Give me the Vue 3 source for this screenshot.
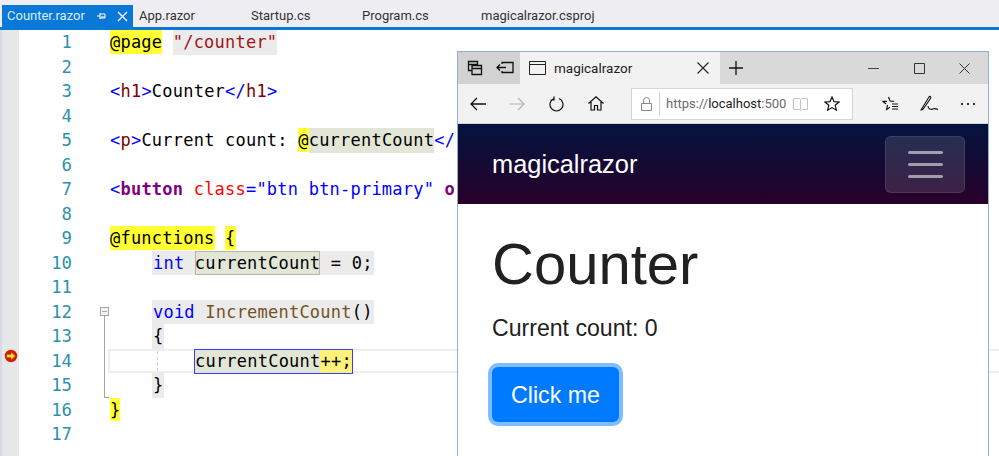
<script setup>
const tabs = ['App.razor', 'Startup.cs', 'Program.cs', 'magicalrazor.csproj']
const lineNumbers = Array.from({ length: 17 }, (_, i) => i + 1)
</script>

<template>
  <div class="screen">
    <header class="tabbar">
      <div class="tab-active">
        <span class="tab-title">Counter.razor</span>
        <svg class="pin" width="12" height="10" viewBox="0 0 12 10"><path d="M1 5h3M4 2v6M4 3h5v4H4M5 6h4" fill="none" stroke="#fff" stroke-width="1"/></svg>
        <svg class="tab-x" width="11" height="11" viewBox="0 0 11 11"><path d="M1 1l9 9M10 1l-9 9" stroke="#fff" stroke-width="1.4"/></svg>
      </div>
      <span v-for="t in tabs" :key="t" class="tab">{{ t }}</span>
    </header>

    <main class="editor">
      <div class="glyph-margin">
        <svg class="bp" width="14" height="14" viewBox="0 0 14 14"><circle cx="7" cy="7" r="6.2" fill="#e51400"/><path d="M2.600 5.200h4.400V2.800L11.600 7 7 11.200V8.800H2.600z" fill="#ffd22e" stroke="#5a4500" stroke-width=".6"/></svg>
      </div>
      <div class="numbers">
        <div v-for="n in lineNumbers" :key="n" class="num">{{ n }}</div>
      </div>
      <div class="code">
        <div class="line"><span class="yl">@page</span> <span class="gy str">"/counter"</span></div>
        <div class="line"></div>
        <div class="line"><span class="tag">&lt;</span><span class="el">h1</span><span class="tag">&gt;</span>Counter<span class="tag">&lt;/</span><span class="el">h1</span><span class="tag">&gt;</span></div>
        <div class="line"></div>
        <div class="line"><span class="tag">&lt;</span><span class="el">p</span><span class="tag">&gt;</span>Current count: <span class="yl">@</span><span class="ol">currentCount</span><span class="tag">&lt;/</span></div>
        <div class="line"></div>
        <div class="line"><span class="tag">&lt;</span><b class="el-b">button</b> <span class="attr">class</span><span class="tag">="btn btn-primary"</span> <b class="el-b">o</b></div>
        <div class="line"></div>
        <div class="line"><span class="yl">@functions</span> <span class="yl">{</span></div>
        <div class="line ind"><span class="gy"><span class="kw">int</span> <span class="ol-box">currentCount</span> = 0;</span></div>
        <div class="line"></div>
        <div class="line ind"><span class="gy"><span class="kw">void</span> <span class="fn">IncrementCount</span>()</span></div>
        <div class="line ind"><span class="gy">{</span></div>
        <div class="line current">
          <span class="guide"></span>
          <span class="exec"><span class="ol-in">currentCount</span><span class="yl-soft">++;</span></span>
        </div>
        <div class="line ind"><span class="gy">}</span></div>
        <div class="line"><span class="yl">}</span></div>
        <div class="line"></div>
        <span class="fold-box"></span>
        <span class="fold-line"></span>
      </div>
    </main>

    <section class="browser">
      <div class="strip">
        <div class="strip-left">
          <svg width="16" height="16" viewBox="0 0 16 16"><path d="M1.500 1.500h9v3h-9zM1.500 4.500v6h3M5 5.500h9.500v9H5zM5 8.500h9.500" fill="none" stroke="#111" stroke-width="1.300"/></svg>
          <svg width="18" height="14" viewBox="0 0 18 14"><path d="M6 3V1.500h11v10H6V10M1 6.500h9M4 3.500l-3 3 3 3" fill="none" stroke="#111" stroke-width="1.300"/></svg>
        </div>
        <div class="strip-tab">
          <svg width="17" height="14" viewBox="0 0 17 14"><path d="M.5.5h16v13H.5zM.5 3.500h16" fill="none" stroke="#222" stroke-width="1"/></svg>
          <span class="strip-title">magicalrazor</span>
          <svg class="strip-close" width="12" height="12" viewBox="0 0 12 12"><path d="M.5.5l11 11M11.500.5l-11 11" stroke="#222" stroke-width="1.100"/></svg>
        </div>
        <svg class="plus" width="14" height="14" viewBox="0 0 14 14"><path d="M7 0v14M0 7h14" stroke="#111" stroke-width="1.300"/></svg>
        <div class="win-controls">
          <svg width="11" height="11" viewBox="0 0 11 11"><path d="M0 5.500h11" stroke="#444"/></svg>
          <svg width="11" height="11" viewBox="0 0 11 11"><path d="M.5.5h10v10H.5z" fill="none" stroke="#333"/></svg>
          <svg width="11" height="11" viewBox="0 0 11 11"><path d="M.5.5l10 10M10.500.5l-10 10" stroke="#333"/></svg>
        </div>
      </div>
      <div class="toolbar">
        <svg class="ti back" width="16" height="14" viewBox="0 0 16 14"><path d="M16 7H1M7 1L1 7l6 6" fill="none" stroke="#111" stroke-width="1.300"/></svg>
        <svg class="ti fwd" width="16" height="14" viewBox="0 0 16 14"><path d="M0 7h15M9 1l6 6-6 6" fill="none" stroke="#b5b5b5" stroke-width="1.200"/></svg>
        <svg class="ti reload" width="15" height="16" viewBox="0 0 15 16"><path d="M5 2.500A6.500 6.500 0 1 0 10 2.500M5 .5v3.500H1.500" fill="none" stroke="#111" stroke-width="1.200"/></svg>
        <svg class="ti home" width="16" height="15" viewBox="0 0 16 15"><path d="M.5 7.500L8 .8l7.500 6.700M3 6v8h3.500V9.500h3V14H13V6" fill="none" stroke="#111" stroke-width="1.200"/></svg>
        <div class="address">
          <svg width="11" height="14" viewBox="0 0 11 14"><path d="M.5 6.500h10v7H.5zM2.500 6.500V3.500a3 3 0 0 1 6 0v3" fill="none" stroke="#888"/></svg>
          <span class="addr-sep"></span>
          <span class="url"><span class="muted">https://</span>localhost<span class="muted">:500</span></span>
          <svg class="book" width="15" height="14" viewBox="0 0 15 14"><path d="M.5 1.500h6l1 1 1-1h6v11h-6l-1 1-1-1h-6zM7.500 2.500v10" fill="none" stroke="#c4c4c4"/></svg>
          <svg class="star" width="16" height="15" viewBox="0 0 16 15"><path d="M8 1l2 4.600 5 .4-3.800 3.300 1.200 4.900L8 11.600l-4.400 2.600 1.200-4.900L1 6l5-.4z" fill="none" stroke="#111" stroke-width="1.200"/></svg>
        </div>
        <svg class="ti favs" width="17" height="15" viewBox="0 0 17 15"><path d="M6.500 1l1.600 4 3.900.300M5.500 9l-.9 4.500L8 11.200M5 5.300H1l3 2.700M10 8h6M10 10.500h6M10 13h6" fill="none" stroke="#111" stroke-width="1.200"/></svg>
        <svg class="ti pen" width="20" height="17" viewBox="0 0 20 17"><path d="M1 15L9 2c1-1.500 2.500 0 1.500 1.500L4 13c-.5 1-1 2-3 2zM8 11c0 3 3 4 5 3s3-.5 5 .5" fill="none" stroke="#111" stroke-width="1.100"/></svg>
        <span class="dots"><i></i><i></i><i></i></span>
      </div>
      <nav class="navbar">
        <span class="brand">magicalrazor</span>
        <span class="toggler"><i></i><i></i><i></i></span>
      </nav>
      <article class="page">
        <h1>Counter</h1>
        <p>Current count: 0</p>
        <button class="btn">Click me</button>
      </article>
    </section>
  </div>
</template>

<style>
html, body { margin: 0; padding: 0; background: #fff; }
</style>

<style scoped>
.screen { position: relative; width: 999px; height: 456px; overflow: hidden; background: #fff; }

.tabbar { box-sizing: border-box; height: 30px; background: #eeeef2; border-bottom: 3px solid #0a78d7; display: flex; align-items: flex-end; font: 13px/22px Roboto, sans-serif; color: #333; }
.tab-active { box-sizing: border-box; width: 131px; height: 22px; margin-left: 2px; padding-left: 5px; background: #0a78d7; color: #d8edf9; display: flex; align-items: center; }
.tab-title { width: 88px; }
.pin { margin-right: 9px; margin-left: 1px; }
.tab { margin-bottom: 0; }
.tab:nth-of-type(1) { margin-left: 6px; width: 112px; }
.tab:nth-of-type(2) { width: 111px; }
.tab:nth-of-type(3) { width: 119px; }

.editor { display: flex; height: 426px; }
.glyph-margin { width: 19px; background: #e6e7e8; border-left: 2px solid #d9d9e4; box-sizing: border-box; position: relative; }
.bp { position: absolute; left: 2px; top: 319px; }
.numbers { width: 53px; text-align: right; color: #2b91af; font: 17.300px/24.500px "DejaVu Sans Mono", monospace; }
.num { height: 24.500px; }
.code { position: relative; flex: 1; margin-left: 38px; font: 17px/24.500px "DejaVu Sans Mono", monospace; letter-spacing: .22px; color: #000; white-space: pre; }
.line { height: 24.500px; }
.ind { padding-left: 42px; }
.ind .gy { padding: 0 1px; }
.yl { background: #ffff33; display: inline-block; height: 23.500px; }
.yl-soft { background: #fff17a; }
.gy { background: #ebebeb; display: inline-block; height: 24.500px; }
.str { color: #a31515; }
.tag { color: #0000ff; }
.el { color: #800000; }
.el-b { color: #800080; }
.attr { color: #ff0000; }
.kw { color: #0000ff; }
.fn { color: #74531f; }
.ol { background: #e2e6d6; display: inline-block; height: 24.500px; }
.ol-box { background: #e2e6d6; box-shadow: inset 0 0 0 1px #b3b6a4; display: inline-block; }
.current { box-sizing: border-box; position: relative; margin-left: -2px; padding-left: 84px; border: 2px solid #eeeef2; border-right: none; line-height: 20.500px; }
.guide { position: absolute; left: 47px; top: 0; height: 20px; border-left: 1px dashed #d0d0d0; }
.exec { display: inline-block; height: 25px; margin-top: -2px; box-sizing: border-box; border: 1px solid #3c3cff; line-height: 23px; vertical-align: top; background: #e2e6d6; }
.ol-in { background: #e2e6d6; display: inline-block; height: 23px; }
.yl-soft { display: inline-block; height: 23px; }
.fold-box { position: absolute; left: -10px; top: 277px; width: 7px; height: 7px; border: 1px solid #a5a5a5; background: linear-gradient(#a5a5a5,#a5a5a5) center/5px 1px no-repeat #f3f3f3; }
.fold-line { position: absolute; left: -6px; top: 286px; width: 4px; height: 81px; border-left: 1px solid #a5a5a5; border-bottom: 1px solid #a5a5a5; }

.browser { position: absolute; left: 457px; top: 51px; width: 532px; height: 405px; box-sizing: border-box; border: 1px solid #8cb0dc; border-bottom: none; background: #fff; display: flex; flex-direction: column; }
.strip { height: 32px; flex: none; background: #d9d9d9; display: flex; align-items: center; }
.strip-left { box-sizing: border-box; width: 62px; height: 32px; padding: 0 6px 0 9px; display: flex; align-items: center; justify-content: space-between; background: #d2d2d2; }
.strip-tab { box-sizing: border-box; width: 200px; height: 32px; padding: 0 8px 0 9px; display: flex; align-items: center; background: #f2f2f2; }
.strip-title { margin-left: 8px; flex: 1; font: 13.500px Roboto, sans-serif; color: #222; }
.strip-close { margin-right: 3px; }
.plus { margin-left: 9px; }
.win-controls { margin-left: auto; padding-right: 18px; display: flex; align-items: center; gap: 34.500px; }
.toolbar { position: relative; height: 40px; flex: none; box-sizing: border-box; background: #f2f2f2; border-bottom: 1px solid #d4d4d4; display: flex; align-items: center; padding-left: 12px; }
.back { margin-right: 23px; }
.fwd { margin-right: 24px; }
.reload { margin-right: 24px; }
.home { margin-right: 27px; }
.address { box-sizing: border-box; width: 222px; height: 32px; background: #fff; border: 1px solid #d5d5d5; display: flex; align-items: center; padding-left: 9px; font: 13px Roboto, sans-serif; color: #222; }
.addr-sep { width: 1px; height: 24px; background: #d0d0d0; margin: 0 6px 0 7px; }
.url { width: 127px; white-space: nowrap; }
.muted { color: #6a6a6a; }
.book { margin-left: 0; }
.star { margin-left: 16px; }
.favs { margin-left: 29px; }
.pen { margin-left: 21px; }
.dots { margin-left: 21px; display: flex; gap: 4px; }
.dots i { width: 2px; height: 2px; background: #333; }
.navbar { box-sizing: border-box; height: 80px; flex: none; background: linear-gradient(#02143f, #290029); display: flex; align-items: center; justify-content: space-between; padding: 0 23px 0 34px; }
.brand { font: 25.400px "Liberation Sans", Arial, sans-serif; color: #fff; }
.toggler { box-sizing: border-box; width: 80px; height: 57px; border-radius: 6px; border: 1px solid rgba(255,255,255,.1); background: rgba(255,255,255,.12); display: flex; flex-direction: column; align-items: center; justify-content: center; gap: 9px; }
.toggler i { width: 35px; height: 3px; border-radius: 1.500px; background: rgba(255,255,255,.55); }
.page { flex: 1; padding: 25px 0 0 34px; font-family: "Liberation Sans", Arial, sans-serif; color: #212121; }
h1 { margin: 0; font-weight: 400; font-size: 58px; line-height: 70px; }
p { margin: 12px 0 0; font-size: 23.100px; line-height: 34px; }
.btn { display: block; margin: 22px 0 0; box-sizing: border-box; width: 127px; height: 55px; padding: 2px 0 0; border: none; border-radius: 6px; background: #007bff; color: #fff; font: 23.200px "Liberation Sans", Arial, sans-serif; box-shadow: 0 0 0 4px #80bdff; }
</style>
